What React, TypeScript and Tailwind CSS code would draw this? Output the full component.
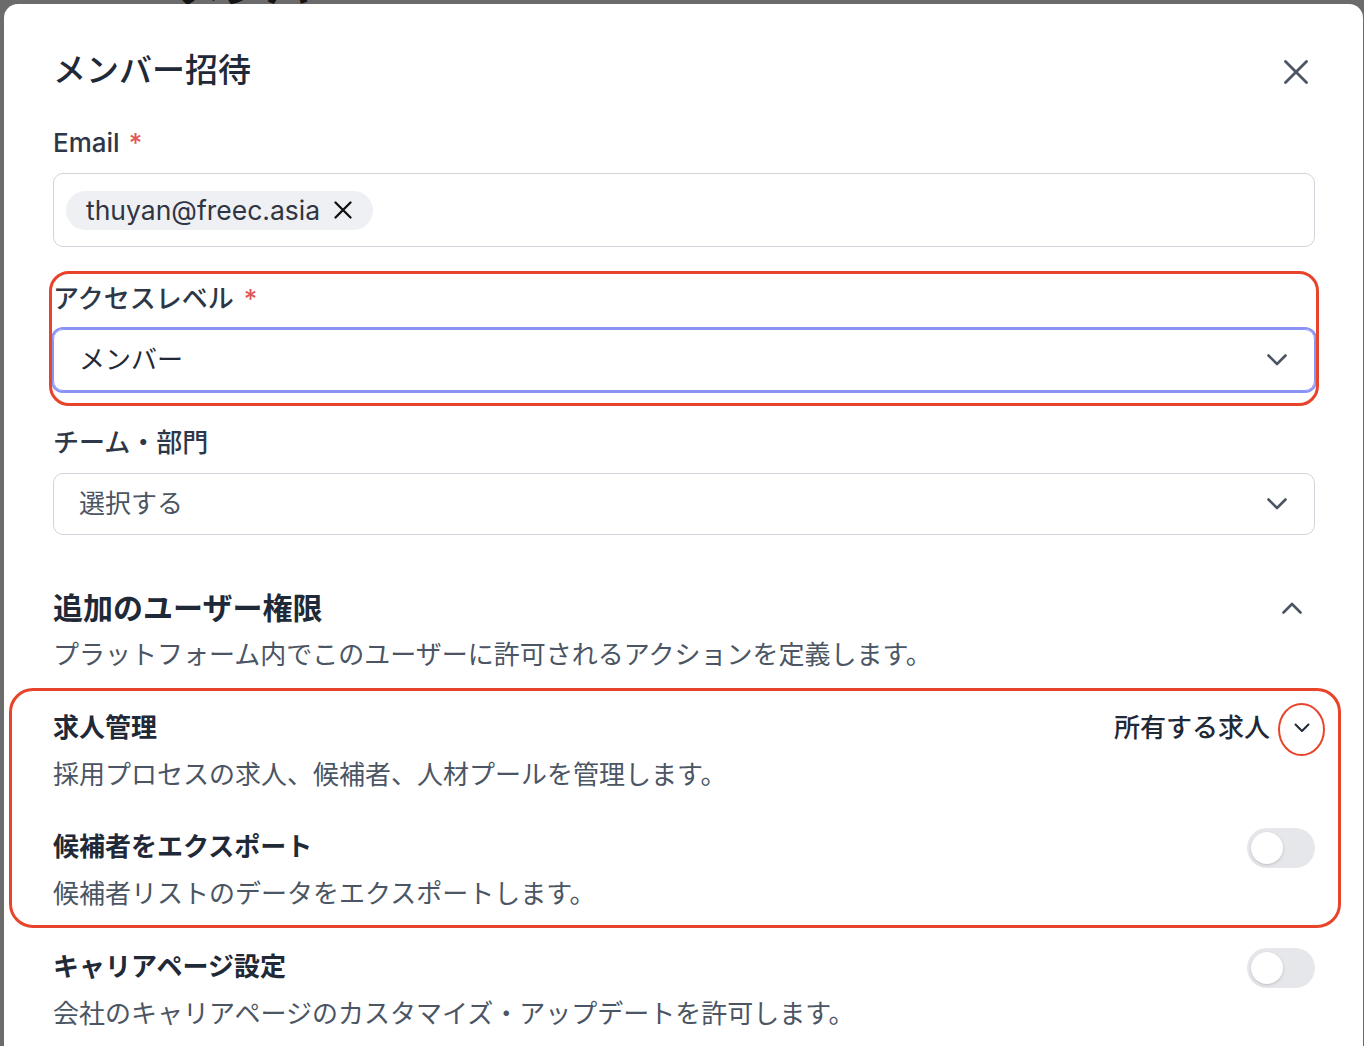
import React from "react";

function ChevronDown({ className = "" }: { className?: string }) {
  return (
    <svg className={className} width="20" height="12" viewBox="0 0 20 12" fill="none">
      <polyline points="1.5,1.5 10,10 18.5,1.5" stroke="#4b5563" strokeWidth="2.6" strokeLinecap="round" strokeLinejoin="round" />
    </svg>
  );
}

function Toggle() {
  return (
    <div className="w-[68px] h-[40px] rounded-full bg-[#e5e7eb] p-[4px] flex items-center shrink-0">
      <div className="w-[32px] h-[32px] rounded-full bg-white shadow-[0_1px_3px_rgba(0,0,0,0.18)]" />
    </div>
  );
}

function PermRow({ label, desc, right }: { label: string; desc: string; right: React.ReactNode }) {
  return (
    <div className="flex justify-between items-start">
      <div className="flex flex-col">
        <div className="text-[26px] leading-[32px] font-semibold text-[#1f2937]">{label}</div>
        <div className="mt-[15px] text-[26px] leading-[32px] text-[#4b5563]">{desc}</div>
      </div>
      {right}
    </div>
  );
}

export default function App() {
  return (
    <div className="relative w-[1364px] h-[1046px] overflow-hidden bg-[#6b6b6b] pl-[4px] pt-[4px] font-[Inter,'Noto_Sans_CJK_JP',sans-serif]">
      <div className="absolute left-[178px] top-[-38px] text-[44px] leading-none font-bold text-[#141414] font-['Noto_Sans_CJK_JP',sans-serif]">
        メンバー
      </div>
      <div className="relative z-10 w-[1359px] h-[1042px] bg-white rounded-t-[14px] pl-[49px] pr-[48px] pt-[46px]">
        {/* Header */}
        <div className="flex items-center justify-between h-[40px]">
          <h1 className="text-[33px] leading-[40px] font-medium text-[#1f2937]">メンバー招待</h1>
          <svg className="mr-[7px] mt-[4px]" width="24" height="24" viewBox="0 0 24 24" fill="none">
            <path d="M1.5 1.5 22.5 22.5M22.5 1.5 1.5 22.5" stroke="#4b5563" strokeWidth="2.8" strokeLinecap="round" />
          </svg>
        </div>

        {/* Email */}
        <div className="mt-[37px]">
          <div className="text-[26px] leading-[32px] font-medium text-[#2d3748] flex">
            Email<span className="ml-[9px] text-[#e25656]">*</span>
          </div>
          <div className="mt-[14px] h-[74px] border border-[#d1d5db] rounded-[10px] flex items-center pl-[12px]">
            <div className="h-[39px] rounded-full bg-[#eff0f3] pl-[20px] pr-[21px] flex items-center gap-[14px]">
              <span className="text-[26.5px] leading-none text-[#2f3542]">thuyan@freec.asia</span>
              <svg width="18" height="18" viewBox="0 0 18 18" fill="none">
                <path d="M1.5 1.5 16.5 16.5M16.5 1.5 1.5 16.5" stroke="#111111" strokeWidth="2.3" strokeLinecap="round" />
              </svg>
            </div>
          </div>
        </div>

        {/* Access level */}
        <div className="relative mt-[36px]">
          <div className="absolute -top-[12px] -bottom-[15px] -left-[4px] -right-[4px] border-[3px] border-[#e8442b] rounded-[20px] pointer-events-none" />
          <div className="text-[26px] leading-[32px] font-medium text-[#2d3748] flex">
            アクセスレベル<span className="ml-[10px] text-[#e25656]">*</span>
          </div>
          <div className="mt-[14px] h-[62px] border border-[#8a93f3] ring-2 ring-[#8a93f3] rounded-[10px] flex items-center justify-between pl-[25px] pr-[27px]">
            <span className="text-[26px] leading-none text-[#1f2937]">メンバー</span>
            <ChevronDown />
          </div>
        </div>

        {/* Team */}
        <div className="mt-[36px]">
          <div className="text-[26px] leading-[32px] font-medium text-[#2d3748]">チーム・部門</div>
          <div className="mt-[14px] h-[62px] border border-[#d1d5db] rounded-[10px] flex items-center justify-between pl-[25px] pr-[27px]">
            <span className="text-[26px] leading-none text-[#4b5563]">選択する</span>
            <ChevronDown />
          </div>
        </div>

        {/* Additional permissions */}
        <div className="mt-[55px] flex items-center justify-between h-[36px]">
          <h2 className="text-[30px] leading-[36px] font-bold text-[#1f2937]">追加のユーザー権限</h2>
          <svg className="mr-[13px]" width="20" height="12" viewBox="0 0 20 12" fill="none">
            <polyline points="1.5,10.5 10,2 18.5,10.5" stroke="#4b5563" strokeWidth="2.6" strokeLinecap="round" strokeLinejoin="round" />
          </svg>
        </div>
        <div className="mt-[13px] text-[26px] leading-[32px] text-[#4b5563]">
          プラットフォーム内でこのユーザーに許可されるアクションを定義します。
        </div>

        <div className="relative mt-[41px] flex flex-col gap-[40px]">
          <div className="absolute -top-[24px] -bottom-[18px] -left-[44px] -right-[26px] border-[3px] border-[#e8442b] rounded-[24px] pointer-events-none" />
          <PermRow
            label="求人管理"
            desc="採用プロセスの求人、候補者、人材プールを管理します。"
            right={
              <div className="flex items-center h-[32px]">
                <span className="text-[26px] leading-none font-medium text-[#1f2937]">所有する求人</span>
                <div className="relative ml-[20px] mr-[1px] w-[24px] h-[24px] flex items-center justify-center">
                  <svg width="16" height="10" viewBox="0 0 16 10" fill="none">
                    <polyline points="1.5,1.5 8,8 14.5,1.5" stroke="#1f2937" strokeWidth="2" strokeLinecap="round" strokeLinejoin="round" />
                  </svg>
                  <div className="absolute left-[-12px] top-[-13px] w-[47px] h-[53px] rounded-[50%] border-[2.5px] border-[#e8442b]" />
                </div>
              </div>
            }
          />
          <PermRow
            label="候補者をエクスポート"
            desc="候補者リストのデータをエクスポートします。"
            right={<div className="-mt-[3px]"><Toggle /></div>}
          />
        </div>

        <div className="mt-[41px]">
          <PermRow
            label="キャリアページ設定"
            desc="会社のキャリアページのカスタマイズ・アップデートを許可します。"
            right={<div className="-mt-[3px]"><Toggle /></div>}
          />
        </div>
      </div>
    </div>
  );
}
